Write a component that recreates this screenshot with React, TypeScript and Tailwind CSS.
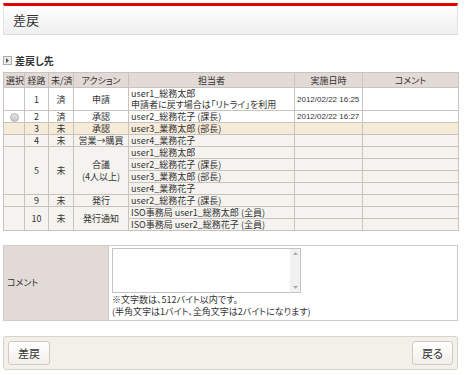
import React from "react";

const font = {
  fontFamily: '"Noto Sans CJK JP", "Liberation Sans", sans-serif',
  fontFeatureSettings: '"palt"',
};
const mono = { fontFamily: '"Liberation Sans", sans-serif' };

type Sub = { person: string; date?: string };
type Row = {
  no: string;
  state: string;
  action: React.ReactNode;
  subs: Sub[];
  radio?: boolean;
  bg: string;
};

const rows: Row[] = [
  {
    no: "1",
    state: "済",
    action: "申請",
    bg: "bg-white",
    subs: [
      {
        person: "user1_総務太郎\n申請者に戻す場合は「リトライ」を利用",
        date: "2012/02/22 16:25",
      },
    ],
  },
  {
    no: "2",
    state: "済",
    action: "承認",
    bg: "bg-white",
    radio: true,
    subs: [{ person: "user2_総務花子 (課長)", date: "2012/02/22 16:27" }],
  },
  { no: "3", state: "未", action: "承認", bg: "bg-[#f6ead8]", subs: [{ person: "user3_業務太郎 (部長)" }] },
  { no: "4", state: "未", action: "営業→購買", bg: "bg-[#f5f3ef]", subs: [{ person: "user4_業務花子" }] },
  {
    no: "5",
    state: "未",
    action: (
      <span className="block leading-[12px]">
        合議
        <br />
        (4人以上)
      </span>
    ),
    bg: "bg-[#f5f3ef]",
    subs: [
      { person: "user1_総務太郎" },
      { person: "user2_総務花子 (課長)" },
      { person: "user3_業務太郎 (部長)" },
      { person: "user4_業務花子" },
    ],
  },
  { no: "9", state: "未", action: "発行", bg: "bg-[#f5f3ef]", subs: [{ person: "user2_総務花子 (課長)" }] },
  {
    no: "10",
    state: "未",
    action: "発行通知",
    bg: "bg-[#f5f3ef]",
    subs: [
      { person: "ISO事務局 user1_総務太郎 (全員)" },
      { person: "ISO事務局 user2_総務花子 (全員)" },
    ],
  },
];

const cell = "border border-[#cbc2be] px-[2px] py-0 leading-[11px]";

export default function App() {
  return (
    <div className="w-[469px] h-[375px] overflow-hidden bg-white text-[#333] text-[9px]" style={font}>
      <div className="pl-[3px] pr-[11px] pt-[3px]">
        {/* header */}
        <div className="h-[32px] border-t-[3px] border-t-[#e30000] border-x border-b border-x-[#e2e2e2] border-b-[#dcdcdc] bg-gradient-to-b from-white to-[#efefef] flex items-center pl-[9px] text-[13px]">
          差戻
        </div>

        {/* section title */}
        <div className="mt-[20px] flex items-center gap-[3px] h-[10px]">
          <span className="w-[9px] h-[9px] border border-[#aaa] bg-[#eee] flex items-center justify-center">
            <svg width="5" height="5" viewBox="0 0 5 5">
              <path d="M1 0 L4 2.5 L1 5 Z" fill="#555" />
            </svg>
          </span>
          <span className="font-bold text-[10px]">差戻し先</span>
        </div>

        {/* route table */}
        <table className="mt-[7px] w-[455px] border-collapse table-fixed">
          <colgroup>
            <col className="w-[21px]" />
            <col className="w-[24px]" />
            <col className="w-[25px]" />
            <col className="w-[55px]" />
            <col className="w-[166px]" />
            <col className="w-[68px]" />
            <col className="w-[96px]" />
          </colgroup>
          <thead>
            <tr className="bg-[#e2dad7]">
              {["選択", "経路", "未/済", "アクション", "担当者", "実施日時", "コメント"].map((h) => (
                <th key={h} className={`${cell} h-[15px] px-0 font-normal text-center whitespace-nowrap overflow-hidden`}>
                  {h}
                </th>
              ))}
            </tr>
          </thead>
          <tbody>
            {rows.map((r) =>
              r.subs.map((s, i) => (
                <tr key={r.no + "-" + i} className={r.bg}>
                  {i === 0 && (
                    <>
                      <td rowSpan={r.subs.length} className={`${cell} text-center`}>
                        {r.radio && (
                          <span className="inline-block w-[9px] h-[9px] rounded-full border border-[#b5b5b5] bg-gradient-to-b from-[#e6e6e6] to-[#c6c6c6] align-middle" />
                        )}
                      </td>
                      <td rowSpan={r.subs.length} className={`${cell} text-center`}>
                        {r.no}
                      </td>
                      <td rowSpan={r.subs.length} className={`${cell} text-center`}>
                        {r.state}
                      </td>
                      <td rowSpan={r.subs.length} className={`${cell} text-center whitespace-nowrap`}>
                        {r.action}
                      </td>
                    </>
                  )}
                  <td
                    className={`${cell} whitespace-pre overflow-hidden ${
                      s.person.includes("\n") ? "h-[20px] leading-[9px]" : "h-[12px]"
                    }`}
                  >
                    {s.person}
                  </td>
                  <td className={`${cell} whitespace-nowrap overflow-hidden text-[8px]`} style={mono}>
                    {s.date ?? ""}
                  </td>
                  <td className={cell}></td>
                </tr>
              ))
            )}
          </tbody>
        </table>

        {/* comment */}
        <div className="mt-[14px] h-[76px] w-[455px] border border-[#d2cac7] flex">
          <div className="w-[105px] bg-[#e2dad7] flex items-center pl-[3px] border-r border-[#d2cac7]">コメント</div>
          <div className="flex-1 pl-[3px] pt-[2px] bg-white">
            <div className="w-[189px] h-[45px] border border-[#c4c4c4] flex">
              <div className="flex-1 bg-white" />
              <div className="w-[10px] bg-[#f1f1f1] flex flex-col justify-between items-center py-[3px]">
                <svg width="5" height="3" viewBox="0 0 5 3">
                  <path d="M0 3 L2.5 0 L5 3 Z" fill="#aaa" />
                </svg>
                <svg width="5" height="3" viewBox="0 0 5 3">
                  <path d="M0 0 L2.5 3 L5 0 Z" fill="#aaa" />
                </svg>
              </div>
            </div>
            <div className="mt-[1px] leading-[12px]">※文字数は、512バイト以内です。</div>
            <div className="leading-[12px]">(半角文字は1バイト、全角文字は2バイトになります)</div>
          </div>
        </div>

        {/* buttons */}
        <div className="mt-[15px] h-[34px] w-[455px] rounded-[3px] border border-[#d8d2cc] bg-[#f3efe9] flex items-center justify-between px-[4px]">
          <button className="w-[42px] h-[24px] rounded-[3px] border border-[#cfcac4] bg-gradient-to-b from-white to-[#f2efea] text-[11px]">
            差戻
          </button>
          <button className="w-[41px] h-[24px] rounded-[3px] border border-[#cfcac4] bg-gradient-to-b from-white to-[#f2efea] text-[11px]">
            戻る
          </button>
        </div>
      </div>
    </div>
  );
}
